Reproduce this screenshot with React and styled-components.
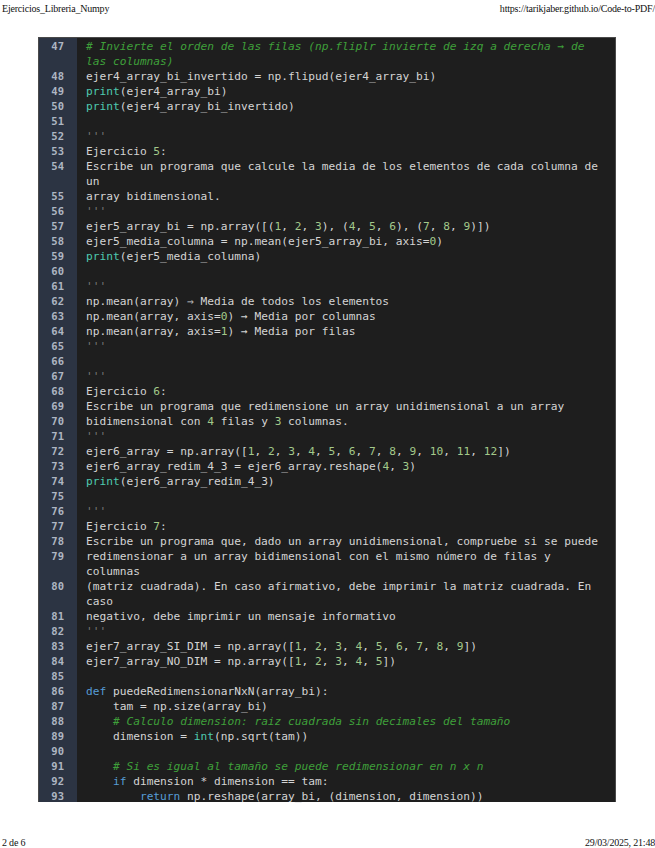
import React from 'react';
import styled, { createGlobalStyle } from 'styled-components';

const GlobalStyle = createGlobalStyle`
  html, body {
    margin: 0;
    padding: 0;
    background: #ffffff;
  }
`

const Page = styled.div`
  width: 655px;
  height: 848px;
  display: flex;
  flex-direction: column;
  overflow: hidden;
`

const PrintBar = styled.div`
  display: flex;
  justify-content: space-between;
  align-items: center;
  height: 14px;
  padding: 1px 0 0 2px;
  font-family: "Liberation Serif", "Times New Roman", serif;
  font-size: 10px;
  color: #111;
  white-space: nowrap;
  letter-spacing: -0.2px;
`

const CodeBox = styled.div`
  margin: 22px 39px 0 38px;
  background: #1e1e1e;
  border: 1px solid #4a4a4a;
  border-bottom: none;
  padding: 1px 0 0;
  height: 765px;
  box-sizing: border-box;
  display: flex;
  flex-direction: column;
  position: relative;
  &::before {
    content: '';
    position: absolute;
    top: 0;
    bottom: 0;
    left: 0;
    width: 38px;
    background: #2c3443;
  }
`

const Line = styled.div`
  display: flex;
  position: relative;
  font-family: "DejaVu Sans Mono", "Liberation Mono", monospace;
  font-size: 11.2px;
  line-height: 15px;
`

const Num = styled.div`
  width: 38px;
  flex: none;
  box-sizing: border-box;
  padding-right: 13px;
  text-align: right;
  color: #aeb6c2;
  font-weight: bold;
  font-size: 10.5px;
`

const Code = styled.div`
  padding-left: 9px;
  color: #d4d4d4;
  white-space: pre;
`

const Tok = styled.span`
  color: ${p => p.$c};
  font-style: ${p => (p.$i ? 'italic' : 'normal')};
`

const Footer = styled(PrintBar)`
  margin-top: auto;
  height: 12px;
  padding-bottom: 0;
`

const colors = {
  cm: '#3fa03a',
  num: '#a3c98a',
  fn: '#4ec9b0',
  kw: '#569cd6',
  doc: '#7b7b7b',
}

function highlight(text) {
  const trimmed = text.trimStart();
  const indent = text.slice(0, text.length - trimmed.length);
  if (trimmed.startsWith('#')) {
    return [indent, <Tok key="c" $c={colors.cm} $i>{trimmed}</Tok>];
  }
  if (trimmed === "'''") {
    return [indent, <Tok key="d" $c={colors.doc}>{trimmed}</Tok>];
  }
  const parts = text.split(/(\b(?:def|if|return|print|int)\b|\b\d+\b)/);
  return parts.map((p, i) => {
    if (i % 2 === 0) return p;
    if (/^\d+$/.test(p)) return <Tok key={i} $c={colors.num}>{p}</Tok>;
    if (p === 'print' || p === 'int') return <Tok key={i} $c={colors.fn}>{p}</Tok>;
    return <Tok key={i} $c={colors.kw}>{p}</Tok>;
  });
}

// each entry: [number, text, ...wrapped continuation rows]
const lines = [
  [47, '# Invierte el orden de las filas (np.fliplr invierte de izq a derecha → de', '#las columnas)'],
  [48, 'ejer4_array_bi_invertido = np.flipud(ejer4_array_bi)'],
  [49, 'print(ejer4_array_bi)'],
  [50, 'print(ejer4_array_bi_invertido)'],
  [51, ''],
  [52, "'''"],
  [53, 'Ejercicio 5:'],
  [54, 'Escribe un programa que calcule la media de los elementos de cada columna de', 'un'],
  [55, 'array bidimensional.'],
  [56, "'''"],
  [57, 'ejer5_array_bi = np.array([(1, 2, 3), (4, 5, 6), (7, 8, 9)])'],
  [58, 'ejer5_media_columna = np.mean(ejer5_array_bi, axis=0)'],
  [59, 'print(ejer5_media_columna)'],
  [60, ''],
  [61, "'''"],
  [62, 'np.mean(array) ⇒ Media de todos los elementos'],
  [63, 'np.mean(array, axis=0) → Media por columnas'],
  [64, 'np.mean(array, axis=1) → Media por filas'],
  [65, "'''"],
  [66, ''],
  [67, "'''"],
  [68, 'Ejercicio 6:'],
  [69, 'Escribe un programa que redimensione un array unidimensional a un array'],
  [70, 'bidimensional con 4 filas y 3 columnas.'],
  [71, "'''"],
  [72, 'ejer6_array = np.array([1, 2, 3, 4, 5, 6, 7, 8, 9, 10, 11, 12])'],
  [73, 'ejer6_array_redim_4_3 = ejer6_array.reshape(4, 3)'],
  [74, 'print(ejer6_array_redim_4_3)'],
  [75, ''],
  [76, "'''"],
  [77, 'Ejercicio 7:'],
  [78, 'Escribe un programa que, dado un array unidimensional, compruebe si se puede'],
  [79, 'redimensionar a un array bidimensional con el mismo número de filas y', 'columnas'],
  [80, '(matriz cuadrada). En caso afirmativo, debe imprimir la matriz cuadrada. En', 'caso'],
  [81, 'negativo, debe imprimir un mensaje informativo'],
  [82, "'''"],
  [83, 'ejer7_array_SI_DIM = np.array([1, 2, 3, 4, 5, 6, 7, 8, 9])'],
  [84, 'ejer7_array_NO_DIM = np.array([1, 2, 3, 4, 5])'],
  [85, ''],
  [86, 'def puedeRedimensionarNxN(array_bi):'],
  [87, '    tam = np.size(array_bi)'],
  [88, '    # Calculo dimension: raiz cuadrada sin decimales del tamaño'],
  [89, '    dimension = int(np.sqrt(tam))'],
  [90, ''],
  [91, '    # Si es igual al tamaño se puede redimensionar en n x n'],
  [92, '    if dimension * dimension == tam:'],
  [93, '        return np.reshape(array_bi, (dimension, dimension))'],
]

function renderRow(text) {
  // continuation rows of a comment keep the comment colour
  if (text.startsWith('#l')) {
    return <Tok $c={colors.cm} $i>{text.slice(1)}</Tok>;
  }
  return highlight(text);
}

export default function App() {
  return (
    <Page>
      <GlobalStyle />
      <PrintBar>
        <span>Ejercicios_Libreria_Numpy</span>
        <span>https://tarikjaber.github.io/Code-to-PDF/</span>
      </PrintBar>
      <CodeBox>
        {lines.map(([n, ...rows]) =>
          rows.map((row, i) => (
            <Line key={`${n}-${i}`}>
              <Num>{i === 0 ? n : ''}</Num>
              <Code>{renderRow(row)}</Code>
            </Line>
          ))
        )}
      </CodeBox>
      <Footer>
        <span>2 de 6</span>
        <span>29/03/2025, 21:48</span>
      </Footer>
    </Page>
  );
}
